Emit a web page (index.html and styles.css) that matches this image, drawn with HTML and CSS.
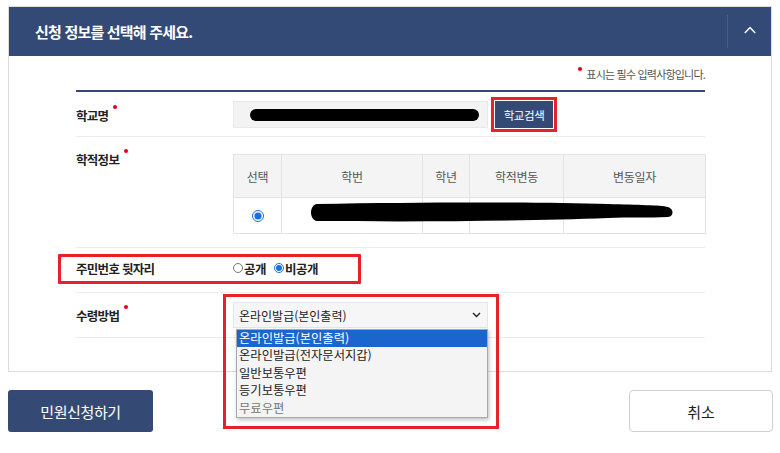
FILE: index.html
```html
<!DOCTYPE html>
<html lang="ko">
<head>
<meta charset="utf-8">
<title>신청 정보</title>
<link rel="stylesheet" href="styles.css">
</head>
<body>
<div class="page">
  <section class="panel">
    <header class="panel-head">
      <h2 class="panel-title">신청 정보를 선택해 주세요.</h2>
      <button class="toggle" type="button" aria-label="접기">
        <svg width="12" height="8" viewBox="0 0 12 8"><polyline points="0.8,7 6,1.6 11.2,7" fill="none" stroke="#fff" stroke-width="1.5"/></svg>
      </button>
    </header>
    <div class="panel-body">
      <p class="req-note"><span class="note-dot"></span>표시는 필수 입력사항입니다.</p>
      <div class="form">
        <div class="row row-school">
          <div class="label">학교명<span class="dot"></span></div>
          <div class="field field-school">
            <div class="text-input"><span class="redact"></span></div>
            <button class="btn-search" type="button">학교검색</button>
          </div>
        </div>
        <div class="row row-record">
          <div class="label label-top">학적정보<span class="dot"></span></div>
          <div class="field table-wrap">
            <table class="record-table">
              <colgroup><col class="c1"><col class="c2"><col class="c3"><col class="c4"><col class="c5"></colgroup>
              <thead>
                <tr><th>선택</th><th>학번</th><th>학년</th><th>학적변동</th><th>변동일자</th></tr>
              </thead>
              <tbody>
                <tr><td><input class="radio-lg" type="radio" name="rec" checked></td><td></td><td></td><td></td><td></td></tr>
              </tbody>
            </table>
            <svg class="redact-table" width="372" height="26" viewBox="0 0 372 26">
              <path d="M9 4 C 120 2, 230 2, 300 4 C 330 5, 352 5, 360 7 C 366 9, 366 16, 360 17 C 340 18, 320 17, 300 18 C 220 21, 120 22, 9 21 C 1 20, 1 5, 9 4 Z" fill="#000"/>
            </svg>
          </div>
        </div>
        <div class="row row-rrn">
          <div class="mark-box">
            <div class="label">주민번호 뒷자리</div>
            <div class="field radios">
              <label class="opt"><input class="radio-sm" type="radio" name="rrn">공개</label>
              <label class="opt"><input class="radio-sm" type="radio" name="rrn" checked>비공개</label>
            </div>
          </div>
        </div>
        <div class="row row-method">
          <div class="label">수령방법<span class="dot"></span></div>
          <div class="field field-select">
            <div class="select">
              <span>온라인발급(본인출력)</span>
              <svg width="9" height="6" viewBox="0 0 9 6"><polyline points="1,1 4.5,4.5 8,1" fill="none" stroke="#222" stroke-width="1.4"/></svg>
            </div>
            <ul class="dropdown">
              <li class="sel">온라인발급(본인출력)</li>
              <li>온라인발급(전자문서지갑)</li>
              <li>일반보통우편</li>
              <li>등기보통우편</li>
              <li class="disabled">무료우편</li>
            </ul>
            <div class="mark-select"></div>
          </div>
        </div>
      </div>
    </div>
  </section>
  <div class="actions">
    <button class="btn-primary" type="button">민원신청하기</button>
    <button class="btn-cancel" type="button">취소</button>
  </div>
</div>
</body>
</html>
```

FILE: styles.css
```css
* { box-sizing: border-box; margin: 0; padding: 0; }
body {
  font-family: "Noto Sans CJK KR", "Noto Sans", sans-serif;
  color: #222;
  background: #fff;
}
.page {
  width: 765px;
  margin-left: 8px;
  padding-top: 6px;
}
.panel {
  width: 764px;
  border: 1px solid #dcdcdc;
}
.panel-head {
  display: flex;
  align-items: center;
  height: 49px;
  background: #344a76;
}
.panel-title {
  flex: 1;
  padding-left: 26px;
  color: #fff;
  font-size: 15px;
  font-weight: 700;
  letter-spacing: -0.8px;
}
.toggle {
  width: 44px;
  height: 33px;
  border: 0;
  border-left: 1px solid #4a5d86;
  background: transparent;
  display: flex;
  align-items: center;
  justify-content: center;
  padding-bottom: 4px;
}
.panel-body {
  padding: 0 66px 33px 67px;
}
.req-note {
  height: 34px;
  display: flex;
  justify-content: flex-end;
  align-items: center;
  padding-top: 1px;
  font-size: 11px;
  color: #555;
  letter-spacing: -0.8px;
}
.note-dot {
  width: 4px;
  height: 4px;
  border-radius: 50%;
  background: #e60012;
  margin-right: 4px;
  align-self: flex-start;
  margin-top: 10px;
}
.form {
  border-top: 2px solid #34496f;
}
.row {
  display: flex;
  align-items: center;
  border-bottom: 1px solid #ececec;
}
.label {
  width: 157px;
  flex: none;
  font-size: 12.5px;
  font-weight: 700;
  color: #222;
  letter-spacing: -0.7px;
  line-height: 18px;
}
.dot {
  display: inline-block;
  width: 4px;
  height: 4px;
  border-radius: 50%;
  background: #e60012;
  margin-left: 5px;
  vertical-align: 12px;
}
.field { flex: 1; }

/* row 1 */
.row-school { padding: 9px 0 8px; }
.field-school {
  display: flex;
  align-items: center;
  gap: 7px;
}
.text-input {
  width: 255px;
  height: 27px;
  background: #f3f3f3;
  border: 1px solid #e9e9e9;
  display: flex;
  align-items: center;
}
.redact {
  display: block;
  margin-left: 16px;
  margin-top: 1px;
  width: 229px;
  height: 12px;
  border-radius: 6px;
  background: #000;
}
.btn-search {
  width: 58px;
  height: 27px;
  border: 0;
  background: #344a74;
  color: #fff;
  font-family: inherit;
  font-size: 11.5px;
  letter-spacing: -0.4px;
  outline: 3px solid #e8202a;
  outline-offset: 1px;
}

/* row 2 */
.row-record {
  align-items: flex-start;
  padding: 17px 0 13px;
}
.label-top { margin-top: -5px; }
.table-wrap { position: relative; }
.record-table {
  width: 472px;
  border-collapse: collapse;
  table-layout: fixed;
  font-size: 12px;
  color: #555;
  letter-spacing: -0.3px;
}
.c1 { width: 48px; }
.c2 { width: 141px; }
.c3 { width: 47px; }
.c4 { width: 94px; }
.c5 { width: 142px; }
.record-table th,
.record-table td {
  border: 1px solid #e3e3e3;
  text-align: center;
  font-weight: 400;
}
.record-table th {
  height: 43px;
  background: #f4f4f4;
}
.record-table td {
  height: 36px;
  background: #fff;
}
.radio-lg {
  width: 12px;
  height: 12px;
  margin: 4px 0 0;
  accent-color: #1a6fe0;
}
.redact-table {
  position: absolute;
  left: 75px;
  top: 46px;
}

/* row 3 */
.row-rrn { padding: 6px 0 8px; }
.mark-box {
  display: flex;
  align-items: center;
  width: 303px;
  height: 30px;
  margin-left: -18px;
  padding-left: 15px;
  border: 3px solid #e8202a;
  border-radius: 1px;
}
.radios {
  display: flex;
  align-items: center;
  gap: 8px;
  font-size: 12.5px;
  font-weight: 700;
  color: #222;
  letter-spacing: -0.5px;
  padding-bottom: 2px;
}
.opt {
  display: flex;
  align-items: center;
}
.radio-sm {
  width: 10px;
  height: 10px;
  margin: 0 1px 0 0;
  accent-color: #1a6fe0;
}

/* row 4 */
.row-method { padding: 9px 0 9px; }
.field-select { position: relative; }
.select {
  width: 255px;
  height: 26px;
  background: #f6f6f6;
  border: 1px solid #e6e6e6;
  display: flex;
  align-items: center;
  justify-content: space-between;
  padding: 0 6px 0 5px;
  font-size: 12px;
  color: #222;
}
.dropdown {
  position: absolute;
  left: 3px;
  top: 27px;
  width: 252px;
  height: 89px;
  list-style: none;
  background: #f4f4f4;
  border: 1px solid #a9a9a9;
  box-shadow: 1px 2px 4px rgba(0, 0, 0, 0.25);
  font-size: 12.3px;
  color: #222;
  z-index: 2;
}
.dropdown li {
  height: 17.4px;
  line-height: 17.4px;
  padding-left: 2px;
}
.dropdown li.sel {
  background: #1b65cf;
  color: #fff;
}
.dropdown li.disabled { color: #777; }
.mark-select {
  position: absolute;
  left: -10px;
  top: -8px;
  width: 276px;
  height: 135px;
  border: 3px solid #e8202a;
  z-index: 3;
}

/* actions */
.actions {
  display: flex;
  justify-content: space-between;
  margin-top: 18px;
}
.btn-primary {
  width: 145px;
  height: 42px;
  border: 0;
  border-radius: 3px;
  background: #344a74;
  color: #fff;
  font-family: inherit;
  font-size: 15px;
  letter-spacing: -0.4px;
}
.btn-cancel {
  width: 144px;
  height: 42px;
  border: 1px solid #cfcfcf;
  border-radius: 4px;
  background: #fff;
  color: #222;
  font-family: inherit;
  font-size: 15px;
}
```
